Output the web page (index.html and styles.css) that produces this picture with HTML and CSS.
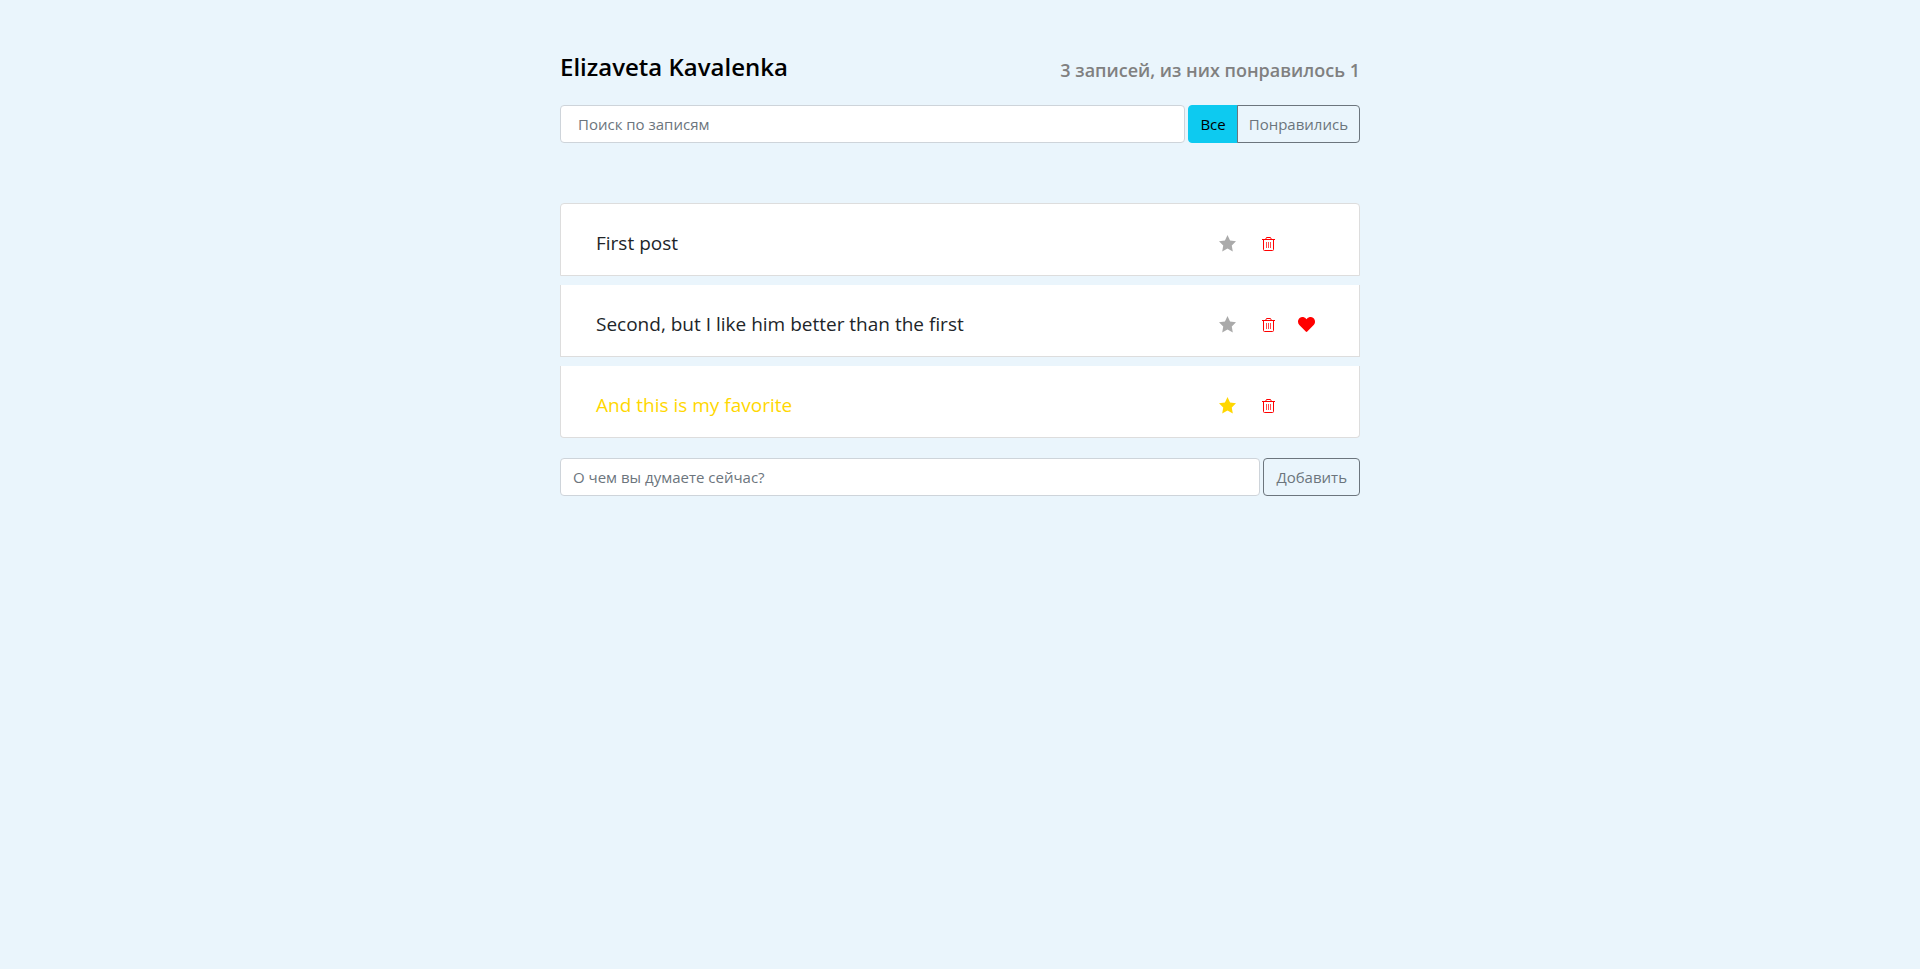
FILE: index.html
```
<!DOCTYPE html>
<html lang="ru">
<head>
<meta charset="utf-8">
<meta name="viewport" content="width=device-width, initial-scale=1">
<title>Elizaveta Kavalenka</title>
<link rel="stylesheet" href="styles.css">
</head>
<body>
<svg class="sprite" aria-hidden="true">
  <symbol id="star" viewBox="0 0 16 16"><path d="M8 0l2.4 5.100 5.600.8-4 3.900 1 5.700L8 12.800 3 15.500l1-5.700L0 5.900l5.600-.8z"/></symbol>
  <symbol id="trash" viewBox="0 0 13 16"><path fill="none" stroke="currentColor" d="M0 3.500h13M3.500 3.500L4.500 1.500h4l1 2M1.500 3.500v10q0 1 1 1h8q1 0 1-1V3.500"/><path fill="none" stroke="currentColor" opacity=".7" d="M4.500 6v6M6.500 6v6M8.500 6v6"/></symbol>
  <symbol id="heart" viewBox="0 0 512 512"><path d="M462.3 62.6C407.500 15.900 326 24.300 275.700 76.200L256 96.500l-19.700-20.300C186.100 24.300 104.500 15.900 49.700 62.600c-62.800 53.600-66.100 149.800-9.900 207.900l193.500 199.800c12.500 12.900 32.800 12.900 45.300 0l193.500-199.800c56.300-58.100 53-154.300-9.800-207.900z"/></symbol>
</svg>
<main class="app">
  <header class="app-header">
    <h1>Elizaveta Kavalenka</h1>
    <h2>3 записей, из них понравилось 1</h2>
  </header>
  <div class="search-panel">
    <input class="field search-field" type="text" placeholder="Поиск по записям" aria-label="Поиск по записям">
    <div class="filter">
      <button class="btn btn-info" type="button">Все</button>
      <button class="btn" type="button">Понравились</button>
    </div>
  </div>
  <ul class="posts">
    <li class="post">
      <span class="post-label">First post</span>
      <div class="actions">
        <button class="icon-btn star" type="button" aria-label="Важное"><svg><use href="#star"/></svg></button>
        <button class="icon-btn trash" type="button" aria-label="Удалить"><svg><use href="#trash"/></svg></button>
      </div>
    </li>
    <li class="post">
      <span class="post-label">Second, but I like him better than the first</span>
      <div class="actions">
        <button class="icon-btn star" type="button" aria-label="Важное"><svg><use href="#star"/></svg></button>
        <button class="icon-btn trash" type="button" aria-label="Удалить"><svg><use href="#trash"/></svg></button>
        <svg class="heart" role="img" aria-label="Понравилось"><use href="#heart"/></svg>
      </div>
    </li>
    <li class="post important">
      <span class="post-label">And this is my favorite</span>
      <div class="actions">
        <button class="icon-btn star" type="button" aria-label="Важное"><svg><use href="#star"/></svg></button>
        <button class="icon-btn trash" type="button" aria-label="Удалить"><svg><use href="#trash"/></svg></button>
      </div>
    </li>
  </ul>
  <form class="add-form">
    <input class="field" type="text" placeholder="О чем вы думаете сейчас?" aria-label="О чем вы думаете сейчас?">
    <button class="btn" type="submit">Добавить</button>
  </form>
</main>
</body>
</html>
```
FILE: styles.css
```
* { box-sizing: border-box; }
body {
  margin: 0;
  background: #eaf5fc;
  color: #212529;
  font: 15px/24px "Open Sans", "Noto Sans", sans-serif;
}
button, input { font: inherit; }
.sprite { display: none; }
.app { max-width: 800px; margin: 0 auto; padding-top: 49px; }
.app-header {
  display: flex;
  justify-content: space-between;
  align-items: flex-end;
  margin-bottom: 21px;
  height: 35px;
  color: #000;
}
h1, h2 { margin: 0; font-weight: 600; }
h1 { font-size: 24px; line-height: 34px; }
h2 { font-size: 18px; line-height: 28px; color: #808080; }
.search-panel, .add-form { display: flex; gap: 3px; }
.add-form { margin-top: 20px; }
.field {
  flex: 1;
  min-width: 0;
  height: 38px;
  padding: 6px 12px;
  border: 1px solid #ced4da;
  border-radius: 4px;
  background: #fff;
  color: #212529;
}
.search-field { padding-left: 17px; }
.field::placeholder { color: #6c757d; opacity: 1; }
.btn {
  height: 38px;
  padding: 6px 12px;
  border: 1px solid #6c757d;
  border-radius: 4px;
  background: transparent;
  color: #6c757d;
  cursor: pointer;
}
.filter .btn { padding: 6px 11px; }
.btn-info { background: #0dcaf0; border-color: #0dcaf0; color: #000; }
.filter { display: flex; }
.filter .btn:first-child { border-top-right-radius: 0; border-bottom-right-radius: 0; }
.filter .btn:last-child { margin-left: -1px; border-top-left-radius: 0; border-bottom-left-radius: 0; }
.posts {
  display: flex;
  flex-direction: column;
  gap: 9px;
  margin: 60px 0 0;
  padding: 0;
  list-style: none;
}
.post {
  display: flex;
  justify-content: space-between;
  align-items: center;
  padding: 24px 35px 16px;
  border: 1px solid #ddd;
  border-top-width: 0;
  background: #fff;
}
.post:first-child { border-top-width: 1px; border-radius: 4px 4px 0 0; }
.post:last-child { border-radius: 0 0 4px 4px; }
.post-label { font-size: 19px; line-height: 31px; }
.important .post-label { color: #ffd700; }
.actions { display: flex; align-items: center; width: 105px; }
.icon-btn { display: flex; padding: 0; border: 0; background: none; cursor: pointer; }
.star { margin-right: 26px; color: #aaa; }
.star svg { width: 17px; height: 17px; fill: currentColor; }
.important .star { color: #ffd700; }
.trash { margin-right: 23px; color: #f00; }
.trash svg { width: 13px; height: 16px; }
.heart { width: 17px; height: 17px; fill: #f00; }
```
